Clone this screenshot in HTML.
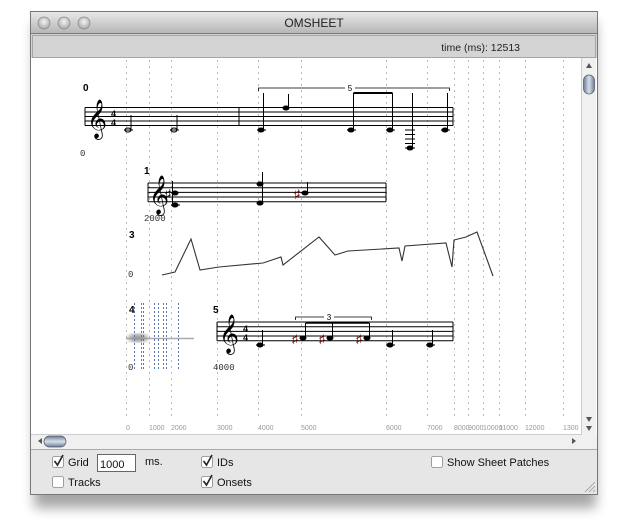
<!DOCTYPE html>
<html><head><meta charset="utf-8"><style>
html,body{margin:0;padding:0;width:630px;height:528px;overflow:hidden;background:#fff;font-family:"Liberation Sans",sans-serif}
svg{position:absolute;left:0;top:0}
</style></head><body>
<svg width="630" height="528" viewBox="0 0 630 528" xmlns="http://www.w3.org/2000/svg" font-family="Liberation Sans, sans-serif">
<defs>
<linearGradient id="tb" x1="0" y1="0" x2="0" y2="1"><stop offset="0" stop-color="#e8e8e8"/><stop offset="1" stop-color="#b4b4b4"/></linearGradient>
<radialGradient id="btn" cx="0.5" cy="0.4" r="0.6"><stop offset="0" stop-color="#f4f4f4"/><stop offset="1" stop-color="#a8a8a8"/></radialGradient>
<linearGradient id="thumb" x1="0" y1="0" x2="1" y2="0"><stop offset="0" stop-color="#6a7d95"/><stop offset="0.5" stop-color="#d7e0ea"/><stop offset="1" stop-color="#6a7d95"/></linearGradient>
<linearGradient id="thumbh" x1="0" y1="0" x2="0" y2="1"><stop offset="0" stop-color="#6a7d95"/><stop offset="0.5" stop-color="#d7e0ea"/><stop offset="1" stop-color="#6a7d95"/></linearGradient>
<filter id="sh" x="-10%" y="-10%" width="120%" height="125%"><feGaussianBlur stdDeviation="6"/></filter>
<filter id="bl"><feGaussianBlur stdDeviation="2"/></filter>
</defs>
<rect x="34" y="22" width="562" height="486" fill="#000" opacity="0.35" filter="url(#sh)"/>
<rect x="31" y="12" width="566" height="482" fill="#fff"/>
<rect x="31" y="12" width="566" height="22" fill="url(#tb)"/>
<line x1="31" y1="33.5" x2="597" y2="33.5" stroke="#7a7a7a"/>
<circle cx="44" cy="23" r="6" fill="url(#btn)" stroke="#8a8a8a" stroke-width="0.7"/>
<circle cx="64" cy="23" r="6" fill="url(#btn)" stroke="#8a8a8a" stroke-width="0.7"/>
<circle cx="84" cy="23" r="6" fill="url(#btn)" stroke="#8a8a8a" stroke-width="0.7"/>
<text x="314" y="27" font-size="12" text-anchor="middle" fill="#222">OMSHEET</text>
<rect x="31" y="34" width="566" height="24" fill="#d4d4d4"/>
<rect x="32.5" y="35.5" width="563" height="22" fill="none" stroke="#a5a5a5"/>
<text x="520" y="51" font-size="10.5" text-anchor="end" fill="#222">time (ms): 12513</text>
<g stroke="#bbb" stroke-width="1" stroke-dasharray="2,4">
<line x1="126.5" y1="60" x2="126.5" y2="420"/><line x1="149.5" y1="60" x2="149.5" y2="420"/><line x1="171.5" y1="60" x2="171.5" y2="420"/><line x1="217.5" y1="60" x2="217.5" y2="420"/><line x1="258.5" y1="60" x2="258.5" y2="420"/><line x1="301.5" y1="60" x2="301.5" y2="420"/><line x1="386.5" y1="60" x2="386.5" y2="420"/><line x1="427.5" y1="60" x2="427.5" y2="420"/><line x1="454.5" y1="60" x2="454.5" y2="420"/><line x1="468.5" y1="60" x2="468.5" y2="420"/><line x1="483.5" y1="60" x2="483.5" y2="420"/><line x1="499.5" y1="60" x2="499.5" y2="420"/><line x1="525.5" y1="60" x2="525.5" y2="420"/><line x1="563.5" y1="60" x2="563.5" y2="420"/>
</g>
<g font-size="7" fill="#999">
<text x="126" y="430">0</text><text x="149" y="430">1000</text><text x="171" y="430">2000</text><text x="217" y="430">3000</text><text x="258" y="430">4000</text><text x="301" y="430">5000</text><text x="386" y="430">6000</text><text x="427" y="430">7000</text><text x="454" y="430">8000</text><text x="468" y="430">9000</text><text x="483" y="430">10000</text><text x="499" y="430">11000</text><text x="525" y="430">12000</text><text x="563" y="430">1300</text>
</g>
<text x="83" y="91" font-size="10" font-weight="bold">0</text>
<text x="80" y="156" font-size="9" font-family="Liberation Mono, monospace" fill="#333">0</text>
<g stroke="#000" stroke-width="1">
<line x1="85" y1="107.5" x2="453" y2="107.5"/><line x1="85" y1="112" x2="453" y2="112"/><line x1="85" y1="116.5" x2="453" y2="116.5"/><line x1="85" y1="121" x2="453" y2="121"/><line x1="85" y1="125.5" x2="453" y2="125.5"/>
<line x1="85" y1="107.5" x2="85" y2="125.5"/><line x1="239" y1="107.5" x2="239" y2="125.5"/><line x1="453" y1="107.5" x2="453" y2="125.5"/>
</g>
<text x="87" y="130" font-size="34" font-family="DejaVu Sans, serif">𝄞</text>
<text x="111" y="117" font-size="9" font-weight="bold">4</text><text x="111" y="126" font-size="9" font-weight="bold">4</text>
<g stroke="#000" stroke-width="1" fill="#000">
<ellipse cx="128" cy="130" rx="3" ry="2" fill="none"/><line x1="124" y1="130" x2="133" y2="130"/><line x1="131" y1="130" x2="131" y2="115"/>
<ellipse cx="174" cy="130" rx="3" ry="2" fill="none"/><line x1="170" y1="130" x2="179" y2="130"/><line x1="177" y1="130" x2="177" y2="115"/>
<ellipse cx="261" cy="130" rx="3" ry="2"/><line x1="257" y1="130" x2="266" y2="130"/><line x1="263.5" y1="130" x2="263.5" y2="93"/>
<ellipse cx="286" cy="108" rx="3" ry="2"/><line x1="288.5" y1="108" x2="288.5" y2="94"/>
<ellipse cx="351" cy="130" rx="3" ry="2"/><line x1="347" y1="130" x2="356" y2="130"/><line x1="353.5" y1="130" x2="353.5" y2="93"/>
<ellipse cx="390" cy="130" rx="3" ry="2"/><line x1="386" y1="130" x2="395" y2="130"/><line x1="392.5" y1="130" x2="392.5" y2="93"/>
<line x1="353.5" y1="93" x2="392.5" y2="93" stroke-width="2"/>
<ellipse cx="410" cy="148" rx="3" ry="2"/><line x1="405" y1="130" x2="415" y2="130"/><line x1="405" y1="134.5" x2="415" y2="134.5"/><line x1="405" y1="139" x2="415" y2="139"/><line x1="405" y1="143.5" x2="415" y2="143.5"/><line x1="405" y1="148" x2="415" y2="148"/><line x1="412.5" y1="148" x2="412.5" y2="93"/>
<ellipse cx="445" cy="130" rx="3" ry="2"/><line x1="441" y1="130" x2="450" y2="130"/><line x1="447.5" y1="130" x2="447.5" y2="93"/>
</g>
<path d="M258.5 91V88H345M355 88H449.5V91" fill="none" stroke="#000" stroke-width="0.8"/>
<text x="350" y="91" font-size="8" text-anchor="middle">5</text>
<text x="144" y="174" font-size="10" font-weight="bold">1</text>
<text x="144" y="221" font-size="9" font-family="Liberation Mono, monospace" fill="#333">2000</text>
<g stroke="#000" stroke-width="1">
<line x1="148" y1="183" x2="386" y2="183"/><line x1="148" y1="187.7" x2="386" y2="187.7"/><line x1="148" y1="192.4" x2="386" y2="192.4"/><line x1="148" y1="197" x2="386" y2="197"/><line x1="148" y1="201.7" x2="386" y2="201.7"/>
<line x1="148" y1="183" x2="148" y2="201.7"/><line x1="386" y1="183" x2="386" y2="201.7"/>
</g>
<text x="149" y="206" font-size="34" font-family="DejaVu Sans, serif">𝄞</text>
<g stroke="#000" fill="#000" stroke-width="1">
<ellipse cx="175" cy="193" rx="3" ry="2"/><ellipse cx="175" cy="205" rx="3" ry="2"/><line x1="171" y1="205" x2="180" y2="205"/><line x1="172.5" y1="181" x2="172.5" y2="205"/>
<ellipse cx="260" cy="184" rx="3" ry="2"/><ellipse cx="260" cy="203" rx="3" ry="2"/><line x1="262.5" y1="172" x2="262.5" y2="203"/>
<ellipse cx="305" cy="193" rx="3" ry="2"/><line x1="307.5" y1="193" x2="307.5" y2="182"/>
</g>
<text x="165" y="198" font-size="12">♯</text>
<text x="294" y="198" font-size="12" fill="#600">♯</text>
<text x="129" y="238" font-size="10" font-weight="bold">3</text>
<text x="128" y="277" font-size="9" font-family="Liberation Mono, monospace" fill="#333">0</text>
<polyline fill="none" stroke="#333" stroke-width="1.1" points="162,275 175,272 191,239 200,270 219,267 263,263 281,257 283,265 319,237 335,255 348,251 399,248 402,261 405,246 446,243 452,267 454,240 466,237 477,232 493,276"/>
<text x="129" y="313" font-size="10" font-weight="bold">4</text>
<text x="128" y="370" font-size="9" font-family="Liberation Mono, monospace" fill="#333">0</text>
<line x1="126" y1="338.5" x2="194" y2="338.5" stroke="#aaa" stroke-width="1.5"/>
<ellipse cx="138" cy="338" rx="10" ry="4" fill="#999" filter="url(#bl)"/>
<g stroke="#5a78b0" stroke-width="1" stroke-dasharray="2,2">
<line x1="134.5" y1="303" x2="134.5" y2="370"/><line x1="141.5" y1="303" x2="141.5" y2="370"/><line x1="143.5" y1="303" x2="143.5" y2="370"/><line x1="154.5" y1="303" x2="154.5" y2="370"/><line x1="158.5" y1="303" x2="158.5" y2="370"/><line x1="163.5" y1="303" x2="163.5" y2="370"/><line x1="166.5" y1="303" x2="166.5" y2="370"/><line x1="178.5" y1="303" x2="178.5" y2="370"/>
</g>
<text x="213" y="313" font-size="10" font-weight="bold">5</text>
<text x="213" y="370" font-size="9" font-family="Liberation Mono, monospace" fill="#333">4000</text>
<g stroke="#000" stroke-width="1">
<line x1="217" y1="322" x2="453" y2="322"/><line x1="217" y1="326.7" x2="453" y2="326.7"/><line x1="217" y1="331.4" x2="453" y2="331.4"/><line x1="217" y1="336" x2="453" y2="336"/><line x1="217" y1="340.7" x2="453" y2="340.7"/>
<line x1="217" y1="322" x2="217" y2="340.7"/><line x1="453" y1="322" x2="453" y2="340.7"/>
</g>
<text x="219" y="345" font-size="34" font-family="DejaVu Sans, serif">𝄞</text>
<text x="243" y="332" font-size="9" font-weight="bold">4</text><text x="243" y="341" font-size="9" font-weight="bold">4</text>
<g stroke="#000" fill="#000" stroke-width="1">
<ellipse cx="260" cy="345" rx="3" ry="2"/><line x1="256" y1="345" x2="265" y2="345"/><line x1="262.5" y1="345" x2="262.5" y2="330"/>
<ellipse cx="303" cy="338" rx="3" ry="2"/><line x1="305.5" y1="338" x2="305.5" y2="323"/>
<ellipse cx="330" cy="338" rx="3" ry="2"/><line x1="332.5" y1="338" x2="332.5" y2="323"/>
<ellipse cx="367" cy="338" rx="3" ry="2"/><line x1="369.5" y1="338" x2="369.5" y2="323"/>
<line x1="305.5" y1="323" x2="369.5" y2="323" stroke-width="1.5"/>
<ellipse cx="390" cy="345" rx="3" ry="2"/><line x1="386" y1="345" x2="395" y2="345"/><line x1="392.5" y1="345" x2="392.5" y2="330"/>
<ellipse cx="430" cy="345" rx="3" ry="2"/><line x1="426" y1="345" x2="435" y2="345"/><line x1="432.5" y1="345" x2="432.5" y2="330"/>
</g>
<text x="292" y="343" font-size="12" fill="#600">♯</text><text x="319" y="343" font-size="12" fill="#600">♯</text><text x="356" y="343" font-size="12" fill="#600">♯</text>
<path d="M295.5 320V317H324M334 317H371.5V320" fill="none" stroke="#000" stroke-width="0.8"/>
<text x="329" y="320" font-size="8" text-anchor="middle">3</text>
<rect x="582" y="58" width="14" height="377" fill="#f0f0f0"/>
<line x1="581.5" y1="58" x2="581.5" y2="435" stroke="#ccc"/>
<path d="M586 68 L589 63 L592 68Z" fill="#555"/>
<rect x="583.5" y="75" width="11" height="19" rx="5.5" fill="url(#thumb)" stroke="#556" stroke-width="0.7"/>
<path d="M586 417 L589 422 L592 417Z" fill="#555"/>
<path d="M586 426 L589 431 L592 426Z" fill="#555"/>
<rect x="31" y="435" width="566" height="14" fill="#f0f0f0"/>
<line x1="31" y1="434.5" x2="581" y2="434.5" stroke="#ccc"/>
<path d="M38 441 L42 438 L42 444Z" fill="#555"/>
<rect x="44" y="436" width="22" height="11" rx="5.5" fill="url(#thumbh)" stroke="#556" stroke-width="0.7"/>
<path d="M572 438 L576 441 L572 444Z" fill="#555"/>
<rect x="31" y="449" width="566" height="45" fill="#e6e6e6"/>
<line x1="31" y1="449.5" x2="597" y2="449.5" stroke="#aaa"/>
<g fill="#fff" stroke="#888" stroke-width="0.8">
<rect x="52.5" y="456.5" width="11" height="11" rx="2"/>
<rect x="52.5" y="476.5" width="11" height="11" rx="2"/>
<rect x="201.5" y="456.5" width="11" height="11" rx="2"/>
<rect x="201.5" y="476.5" width="11" height="11" rx="2"/>
<rect x="431.5" y="456.5" width="11" height="11" rx="2"/>
</g>
<g fill="none" stroke="#222" stroke-width="1.6">
<path d="M54.5 461 L57.5 465 L63 455"/>
<path d="M203.5 461 L206.5 465 L212 455"/>
<path d="M203.5 481 L206.5 485 L212 475"/>
</g>
<rect x="97.5" y="454.5" width="38" height="17" fill="#fff" stroke="#666"/>
<g font-size="11" fill="#111">
<text x="68" y="466">Grid</text>
<text x="100" y="468">1000</text>
<text x="145" y="465">ms.</text>
<text x="68" y="486">Tracks</text>
<text x="217" y="466">IDs</text>
<text x="217" y="486">Onsets</text>
<text x="447" y="466">Show Sheet Patches</text>
</g>
<path d="M585 492 L595 482 M589 492 L595 486 M593 492 L595 490" stroke="#999" stroke-width="0.8"/>
<rect x="30.5" y="11.5" width="567" height="483" fill="none" stroke="#777" stroke-width="1"/>
</svg>
</body></html>
